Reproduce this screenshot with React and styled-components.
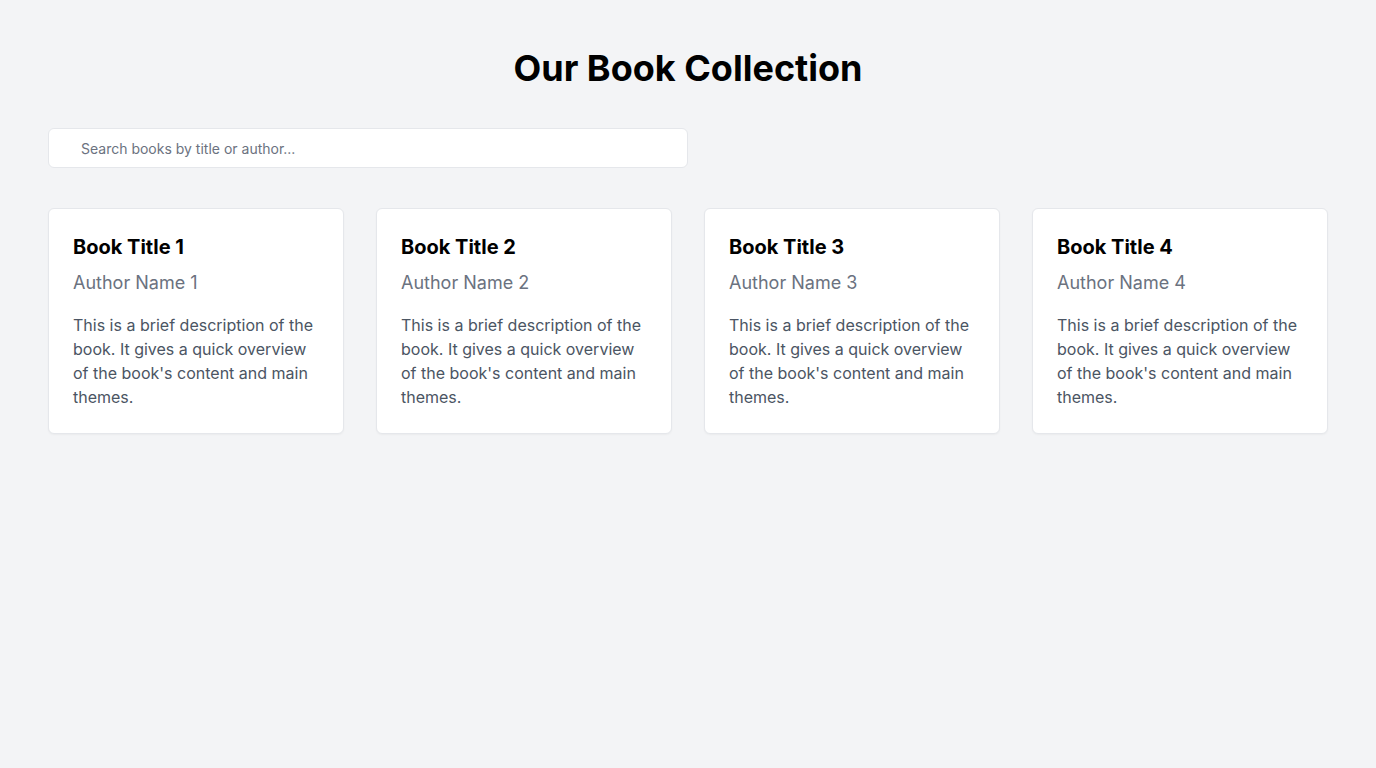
import React, { useState } from 'react';
import styled, { createGlobalStyle } from 'styled-components';

const GlobalStyle = createGlobalStyle`
  * {
    box-sizing: border-box;
  }
  body {
    margin: 0;
    background-color: #f3f4f6;
    font-family: Inter, "Noto Sans", sans-serif;
  }
`;

const Page = styled.div`
  min-height: 100vh;
  padding: 48px;
`;

const Heading = styled.h1`
  font-size: 36px;
  line-height: 40px;
  font-weight: 700;
  color: #000;
  text-align: center;
  margin: 0 0 40px;
`;

const SearchInput = styled.input`
  display: block;
  width: 640px;
  height: 40px;
  padding: 0 16px 0 32px;
  border: 1px solid #e5e7eb;
  border-radius: 6px;
  background-color: #ffffff;
  font-family: inherit;
  font-size: 14px;
  color: #111827;
  margin-bottom: 40px;
  outline: none;
  &::placeholder {
    color: #6b7280;
  }
`;

const Grid = styled.div`
  display: grid;
  grid-template-columns: repeat(4, 1fr);
  gap: 32px;
`;

const Card = styled.div`
  background-color: #ffffff;
  border: 1px solid #e5e7eb;
  border-radius: 6px;
  padding: 24px;
  box-shadow: 0 1px 2px rgba(0, 0, 0, 0.04);
`;

const Title = styled.h2`
  font-size: 20px;
  line-height: 28px;
  font-weight: 700;
  color: #000;
  margin: 0 0 8px;
`;

const Author = styled.p`
  font-size: 18px;
  line-height: 28px;
  color: #6b7280;
  margin: 0 0 16px;
`;

const Description = styled.p`
  font-size: 16px;
  line-height: 24px;
  color: #4b5563;
  margin: 0;
`;

const books = [1, 2, 3, 4].map((n) => ({
  title: `Book Title ${n}`,
  author: `Author Name ${n}`,
  description:
    "This is a brief description of the book. It gives a quick overview of the book's content and main themes.",
}));

function App() {
  const [query, setQuery] = useState('');
  const q = query.toLowerCase();
  const filtered = books.filter(
    (b) => b.title.toLowerCase().includes(q) || b.author.toLowerCase().includes(q)
  );

  return (
    <Page>
      <GlobalStyle />
      <Heading>Our Book Collection</Heading>
      <SearchInput
        type='text'
        placeholder='Search books by title or author...'
        value={query}
        onChange={(e) => setQuery(e.target.value)}
      />
      <Grid>
        {filtered.map((book) => (
          <Card key={book.title}>
            <Title>{book.title}</Title>
            <Author>{book.author}</Author>
            <Description>{book.description}</Description>
          </Card>
        ))}
      </Grid>
    </Page>
  );
}

export default App;
